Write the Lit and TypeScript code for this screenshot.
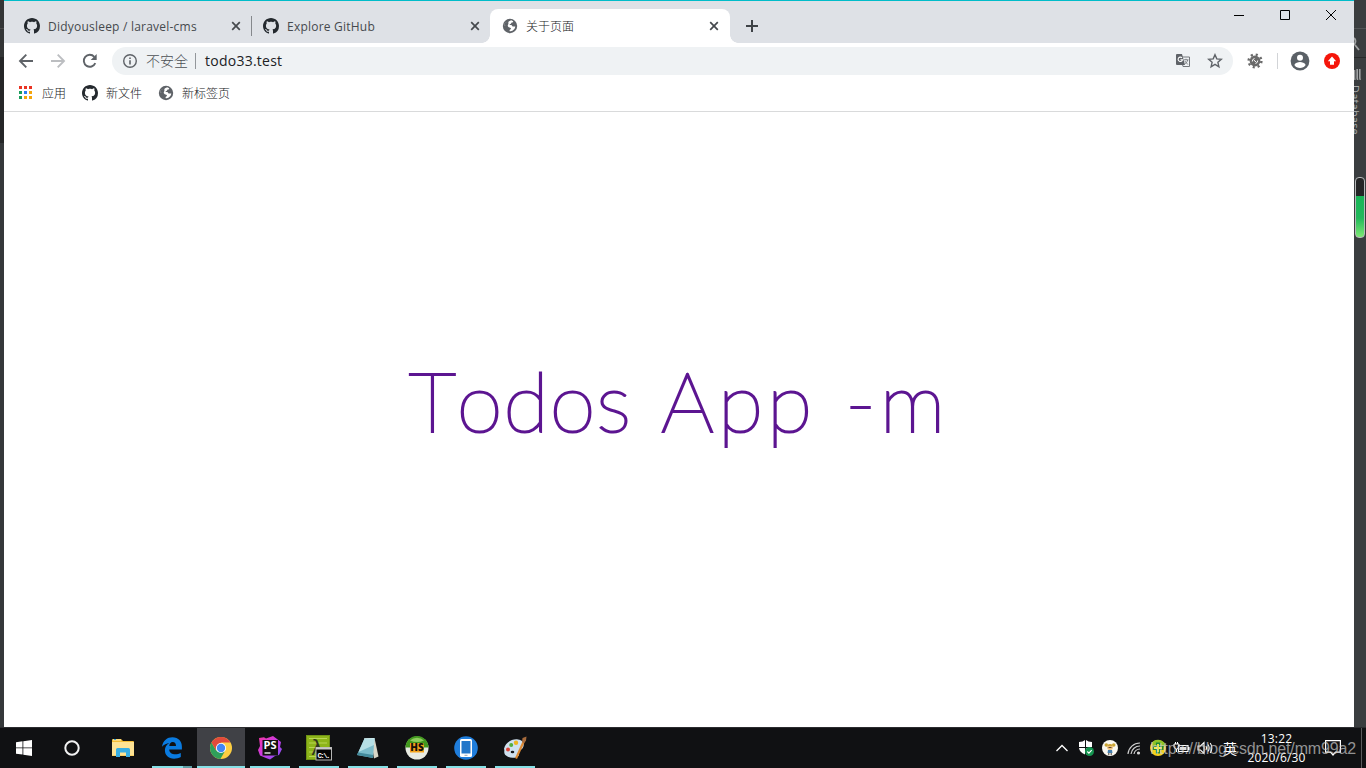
import { LitElement, html, css, svg } from 'lit';
import { customElement } from 'lit/decorators.js';
import { classMap } from 'lit/directives/class-map.js';

const github = html`
  <svg width="16" height="16" viewBox="0 0 16 16">
    <path fill="#24292e" d="M8 0C3.58 0 0 3.58 0 8c0 3.54 2.29 6.53 5.47 7.59.4.07.55-.17.55-.38 0-.19-.01-.82-.01-1.49-2.01.37-2.53-.49-2.69-.94-.09-.23-.48-.94-.82-1.13-.28-.15-.68-.52-.01-.53.63-.01 1.08.58 1.23.82.72 1.21 1.87.87 2.33.66.07-.52.28-.87.51-1.07-1.78-.2-3.64-.89-3.64-3.95 0-.87.31-1.59.82-2.15-.08-.2-.36-1.02.08-2.12 0 0 .67-.21 2.2.82.64-.18 1.32-.27 2-.27s1.36.09 2 .27c1.53-1.04 2.2-.82 2.2-.82.44 1.1.16 1.92.08 2.12.51.56.82 1.27.82 2.15 0 3.07-1.87 3.75-3.65 3.95.29.25.54.73.54 1.48 0 1.07-.01 1.93-.01 2.2 0 .21.15.46.55.38A8.01 8.01 0 0 0 16 8c0-4.42-3.58-8-8-8z"/>
  </svg>`;

const globe = html`
  <svg width="16" height="16" viewBox="0 0 16 16">
    <circle cx="8" cy="8" r="7.2" fill="#5f6368"/>
    <path fill="#fff" d="M9.2 2.3l1.9.9c.3.8-.4 1.300-1.300 1.400-.8.100-.5 1.300-1.400 1.400-1 .1-1.100.6-.4.9h1.200c1 .2.700 1.400 1.700 1.500h2.400c-.2 2.300-2 4.400-4.700 4.900-1 .1-1.100-.300-1-1 .1-.8 1.400-.9 1.400-1.800-.1-.9-1.300-.8-2.200-1.300-.9-.5-.8-1.400-1.900-1.600L2.300 7.300c.1-1.300.6-2.300 1.300-3.200.9.500 1.300 1.200 2.400.8.900-.4.200-1.200 1.100-1.600.8-.3 1.300-.4 2.100-1z"/>
    <path fill="#5f6368" d="M2.100 6.500l1.300-2.500 2 .3 1.100 1-.5 1.600-.5 1.200-1.500.2z"/>
  </svg>`;

const cross = html`
  <svg width="10" height="10" viewBox="0 0 10 10">
    <path d="M1.200 1.200l7.600 7.600M8.800 1.200L1.200 8.800" stroke="#45494d" stroke-width="1.700"/>
  </svg>`;

const back = html`
  <svg width="16" height="16" viewBox="0 0 16 16" fill="none" stroke="currentColor" stroke-width="1.900">
    <path d="M15 8H2.500M8.300 1.700L2 8l6.300 6.300"/>
  </svg>`;

const reload = html`
  <svg width="16" height="16" viewBox="0 0 16 16">
    <path d="M13.300 10.200A6 6 0 1 1 12.300 3.800" fill="none" stroke="#5f6368" stroke-width="1.900"/>
    <path d="M14.700 1v6H8.700z" fill="#5f6368"/>
  </svg>`;

const info = html`
  <svg width="14" height="14" viewBox="0 0 14 14">
    <circle cx="7" cy="7" r="6.300" fill="none" stroke="#5f6368" stroke-width="1.400"/>
    <path d="M7 6.200v4.300M7 3.500v1.500" stroke="#5f6368" stroke-width="1.600"/>
  </svg>`;

const translate = html`
  <svg width="16" height="16" viewBox="0 0 16 16">
    <path d="M6 4h8.500v9.500H8z" fill="#eff2f4" stroke="#74787c"/>
    <path d="M1 2q0-1 1-1h5l3 11H2q-1 0-1-1z" fill="#5f6368"/>
    <path d="M7 4.900a2.200 2.200 0 1 0 .5 1.800H5.400" fill="none" stroke="#fff" stroke-width="1.100"/>
    <path d="M9 6.800h4.500M11 5.800v1M12.700 7c-.5 2-1.700 3.200-3 4M9.800 8l3 3.500" fill="none" stroke="#74787c" stroke-width=".9"/>
  </svg>`;

const star = html`
  <svg width="16" height="16" viewBox="0 0 16 16">
    <path d="M8 1.700l1.800 4.200 4.500.4-3.400 3 1 4.500L8 11.400l-3.900 2.400 1-4.500-3.400-3 4.500-.4z" fill="none" stroke="#5f6368" stroke-width="1.400"/>
  </svg>`;

const gear = html`
  <svg width="16" height="16" viewBox="0 0 16 16">
    <circle cx="8" cy="8" r="5.400" fill="#6a6a6a"/>
    <circle cx="8" cy="8" r="6.400" fill="none" stroke="#6a6a6a" stroke-width="2.400" stroke-dasharray="2.100 2.920"/>
    <path d="M5.300 8.500a3 3 0 0 1 2.200-3M10.700 7.500a3 3 0 0 1-2.200 3M6.800 7l2.400 2.200" fill="none" stroke="#fff" stroke-width="1"/>
  </svg>`;

const profile = html`
  <svg width="20" height="20" viewBox="0 0 20 20">
    <circle cx="10" cy="10" r="9.400" fill="#5a6066"/>
    <circle cx="10" cy="6.800" r="3" fill="#fff"/>
    <path d="M4.300 14c1-2.200 3.600-3 5.700-3s4.700.8 5.700 3a7 7 0 0 1-11.400 0z" fill="#fff"/>
  </svg>`;

const update = html`
  <svg width="16" height="16" viewBox="0 0 16 16">
    <circle cx="8" cy="8" r="8" fill="#f5150a"/>
    <path d="M8 3.500l4.200 4.700H10v3.600H6V8.200H3.800z" fill="#fff"/>
  </svg>`;

const appColors = ['#ea3323', '#ea3323', '#ea3323', '#1a9e5c', '#2b7cf0', '#f5a50b', '#1a9e5c', '#f5a50b', '#f5a50b'];

const appsGrid = html`
  <svg width="14" height="14" viewBox="0 0 14 14">
    ${appColors.map((color, i) => svg`<rect x=${(i % 3) * 5} y=${Math.floor(i / 3) * 5} width="3" height="3" fill=${color} />`)}
  </svg>`;

const windowsLogo = html`
  <svg width="16" height="16" viewBox="0 0 16 16">
    <path fill="#fff" d="M0 2.200l6.500-.9v6.200H0zM7.300 1.200L16 0v7.500H7.300zM0 8.300h6.500v6.300L0 13.700zM7.300 8.300H16V16l-8.700-1.200z"/>
  </svg>`;

const cortana = html`
  <svg width="16" height="16" viewBox="0 0 16 16">
    <circle cx="8" cy="8" r="6.700" fill="none" stroke="#f2f2f2" stroke-width="2"/>
  </svg>`;

const folder = html`
  <svg width="22" height="20" viewBox="0 0 22 20">
    <path d="M0 2q0-1 1-1h8l2 2h10q1 0 1 1v14H0z" fill="#f3bd36"/>
    <path d="M1 1h8v2H1z" fill="#fdd878"/>
    <path d="M2 1.500h2" stroke="#37a9e0"/>
    <path d="M0 4h22v13.500H0z" fill="#fee394"/>
    <path d="M4 19v-7.500q0-1.500 1.500-1.500h11q1.500 0 1.500 1.500V19h-4v-4.500H8V19z" fill="#38aee3"/>
  </svg>`;

const edge = html`
  <svg width="20" height="22" viewBox="0 0 20 22">
    <path fill="#0a7be0" d="M0 9.800C1 3.500 5.300.3 10.400.3c6.200 0 9.500 4.300 9.500 9.500v2.700H7.200c.2 3.400 3 4.800 6 4.800 2.200 0 3.900-.5 5.600-1.400v4.200c-2 1.100-4.400 1.600-6.800 1.600-5.600 0-9.100-3.500-9.100-8.400 0-3.300 1.700-6 4.600-7.300C4.400 6.500 2 7.500 0 9.800zM7.300 8.900H14c0-2.500-1.200-4-3.300-4-2 0-3.300 1.800-3.400 4z"/>
  </svg>`;

const chrome = html`
  <svg width="22" height="22" viewBox="0 0 22 22">
    <circle cx="11" cy="11" r="11" fill="#fdce42"/>
    <path d="M1.500 5.500A11 11 0 0 0 10.400 22l4.900-8.500H6.200z" fill="#2f9f5a"/>
    <path d="M1.500 5.500A11 11 0 0 1 20.500 5.500H11L6.200 13.600z" fill="#e24a3b"/>
    <circle cx="11" cy="11" r="5.100" fill="#fff"/>
    <circle cx="11" cy="11" r="4.200" fill="#4386f4"/>
  </svg>`;

const phpstorm = html`
  <svg width="24" height="24" viewBox="0 0 24 24">
    <defs>
      <linearGradient id="ps" x1="0" y1="0" x2="1" y2="1">
        <stop offset="0" stop-color="#f4359e"/>
        <stop offset=".5" stop-color="#c93be8"/>
        <stop offset="1" stop-color="#7956f4"/>
      </linearGradient>
    </defs>
    <path d="M1 2l5-.8 2 1.200L15 0l8 6-1 5 2 2-3 6-4 1-5 3.500-4-1.500-6-2.500L0 14l2-4z" fill="url(#ps)"/>
    <rect x="4.500" y="4" width="15.500" height="15.500" fill="#111"/>
    <text x="5.500" y="12.800" font-family="Open Sans, sans-serif" font-size="10.500" font-weight="700" fill="#fff" textLength="13" lengthAdjust="spacingAndGlyphs">PS</text>
    <path d="M6.500 17h6" stroke="#fff" stroke-width="1.300"/>
  </svg>`;

const lambda = html`
  <svg width="26" height="26" viewBox="0 0 26 26">
    <rect x="0" y="0" width="24" height="25" fill="#8db51a"/>
    <rect x=".5" y=".5" width="23" height="24" fill="none" stroke="#6f9314"/>
    <path d="M3 3.500h18M3 8h18M3 12.500h18M3 17h18M3 21.500h18" stroke="#b9d755" stroke-width="1.200"/>
    <text x="5" y="20" font-family="DejaVu Sans, sans-serif" font-size="21" fill="#30371d">λ</text>
    <rect x="10" y="12.500" width="15.500" height="12.500" fill="#050505" stroke="#b5b5b5"/>
    <path d="M10 13.500h15.500" stroke="#c9c9c9" stroke-width="2"/>
    <text x="11.500" y="22.500" font-family="Liberation Mono, monospace" font-size="7.500" font-weight="700" fill="#fff" textLength="13">C:\\.</text>
  </svg>`;

const notepad = html`
  <svg width="24" height="22" viewBox="0 0 24 22">
    <path d="M18.500 1l4 18.500-4.500 2L15 2z" fill="#d9d6c8"/>
    <path d="M8.500 1.500L18.500 1 17 21 1 18z" fill="#7cbccb"/>
    <path d="M8.500 1.500L18.500 1l-.5 7L2.500 15z" fill="#b6e0e6"/>
    <path d="M1 18l16 3 .3-3L2 15.500z" fill="#438a9c"/>
    <path d="M8.500 1.500h10" stroke="#e9f6f6" stroke-dasharray="1 1"/>
  </svg>`;

const heidi = html`
  <svg width="24" height="24" viewBox="0 0 24 24">
    <circle cx="12" cy="12" r="11.500" fill="#e8ebe2"/>
    <path d="M.5 11.500a11.500 11.500 0 0 1 23 0z" fill="#42991e"/>
    <path d="M5 4.500a10 10 0 0 1 14 0q-7 3-14 0" fill="#8fcd5e"/>
    <rect x="5" y="7" width="14" height="9.500" fill="#f5a41d"/>
    <text x="5.200" y="15.300" font-family="Open Sans, sans-serif" font-size="10" font-weight="800" fill="#15120a" textLength="13.500">HS</text>
  </svg>`;

const phone = html`
  <svg width="24" height="24" viewBox="0 0 24 24">
    <circle cx="12" cy="12" r="11.800" fill="#1f7ddb"/>
    <rect x="6" y="3" width="12" height="18" rx="1.500" fill="#fff"/>
    <path d="M7.500 5h9v12.500h-9z" fill="#2477c9"/>
    <path d="M10.500 19.300h3" stroke="#96a5b2"/>
  </svg>`;

const paint = html`
  <svg width="24" height="24" viewBox="0 0 24 24">
    <path d="M1 13C2 7 9 2.500 15 3.500c6 1 6.500 5 5 8s-3.500 1.500-4 4 1 4-2 5.500c-4 1.500-8 1-11-1.500s-1-5-2-6.500z" fill="#cfe0ee"/>
    <circle cx="5" cy="13.500" r="2" fill="#dc4438"/>
    <circle cx="8.200" cy="9" r="2" fill="#54ae3e"/>
    <circle cx="13" cy="6.800" r="2.200" fill="#eeb421"/>
    <ellipse cx="9.500" cy="16" rx="1.800" ry="1.200" fill="#15171b"/>
    <path d="M20.500 6L13 22.500" stroke="#dd8a34" stroke-width="2.200"/>
    <path d="M19 6l.5-4 4-1.500-.5 4-2 3z" fill="#a66b3c"/>
  </svg>`;

const chevron = html`
  <svg width="14" height="14" viewBox="0 0 14 14">
    <path d="M1.500 10L7 4.500l5.500 5.500" fill="none" stroke="#fff" stroke-width="1.300"/>
  </svg>`;

const shield = html`
  <svg width="16" height="16" viewBox="0 0 16 16">
    <path d="M7 0q-2 2-6 2v5h6zM8 0q2 2 6 2v5H8zM1 8h6v6.500Q1.500 12 1 8zM8 8h6q-.5 4-6 6.500z" fill="#fff"/>
    <circle cx="11.500" cy="11.500" r="4.500" fill="#159550"/>
    <path d="M9.300 11.500l1.600 1.600 2.800-3" stroke="#fff" fill="none" stroke-width="1.100"/>
  </svg>`;

const avatar = html`
  <svg width="16" height="16" viewBox="0 0 16 16">
    <circle cx="8" cy="8" r="8" fill="#faf8f0"/>
    <circle cx="4.300" cy="5" r="1.800" fill="#c9a432"/>
    <circle cx="11.700" cy="5" r="1.800" fill="#c9a432"/>
    <circle cx="8" cy="7" r="3" fill="#edc27e"/>
    <path d="M5 6q3-4 6 0z" fill="#c9a432"/>
    <path d="M6.500 7.500h3" stroke="#5d4630"/>
    <path d="M6 10h4l.5 3h-5z" fill="#447dab"/>
    <path d="M6.800 13v2M9.200 13v2" stroke="#443b34"/>
  </svg>`;

const wifi = html`
  <svg width="14" height="14" viewBox="0 0 14 14" fill="none" stroke="#d0d0d0" stroke-width="1.200">
    <path d="M1 13A12 12 0 0 1 13 2M4 13A9 9 0 0 1 13 5M7 13a6 6 0 0 1 6-5"/>
    <circle cx="11.500" cy="12" r="1" fill="#fff"/>
  </svg>`;

const plusBall = html`
  <svg width="18" height="18" viewBox="0 0 18 18">
    <circle cx="9" cy="9" r="8" fill="#f6d11c"/>
    <path d="M3.500 3a8 8 0 0 1 13 3L14 9 8 6 3 9z" fill="#8ec428"/>
    <path d="M9 3.500v11M3.500 9h11" stroke="#1d8a34" stroke-width="4.200"/>
    <path d="M9 5v8M5 9h8" stroke="#f9ec48" stroke-width="1.800"/>
  </svg>`;

const battery = html`
  <svg width="18" height="14" viewBox="0 0 18 14">
    <path d="M5.500 4.500H15v6H5.500zM16 6v3" fill="none" stroke="#fff" stroke-width="1.200"/>
    <path d="M7 6h6.500v3H7z" fill="#ddd"/>
    <path d="M1 3h5v3q-.5 2-2.500 2T1 6zM2.500 1v2M4.500 1v2M3.500 8v3" fill="none" stroke="#fff"/>
  </svg>`;

const speaker = html`
  <svg width="18" height="14" viewBox="0 0 18 14" fill="none" stroke="#fff" stroke-width="1.100">
    <path d="M1 5h2.500L7 1.500v11L3.500 9H1zM9 5q1.300 2 0 4M11 3.500q2.300 3.500 0 7M13.200 2q3.300 5 0 10"/>
  </svg>`;

const notification = html`
  <svg width="16" height="16" viewBox="0 0 16 16">
    <path d="M.6.600h14.800v11.500H10.500L8 15l-2.500-2.900H.6z" fill="none" stroke="#fff" stroke-width="1.200"/>
  </svg>`;

@customElement('browser-window')
export class BrowserWindow extends LitElement {
  static styles = css`
    :host {
      display: flex;
      flex-direction: column;
      box-sizing: border-box;
      border-top: 1px solid #00bcc9;
      background: #fff;
      font-family: 'Open Sans', 'Noto Sans CJK SC', sans-serif;
      font-size: 12px;
      color: #45494d;
      min-width: 0;
    }

    svg {
      display: block;
      flex: none;
    }

    .tabs {
      display: flex;
      height: 42px;
      background: #dee1e6;
      padding-left: 8px;
      box-sizing: border-box;
    }

    .tab {
      display: flex;
      align-items: center;
      box-sizing: border-box;
      width: 239px;
      height: 34px;
      margin-top: 8px;
      padding: 0 10px 0 12px;
      gap: 8px;
      position: relative;
    }

    .tab.active {
      width: 240px;
      padding-right: 11px;
      background: #fff;
      border-radius: 8px 8px 0 0;
    }

    .tab.active::before,
    .tab.active::after {
      content: '';
      position: absolute;
      bottom: 0;
      width: 8px;
      height: 8px;
    }

    .tab.active::before {
      left: -8px;
      background: radial-gradient(circle at 0 0, transparent 7.5px, #fff 8px);
    }

    .tab.active::after {
      right: -8px;
      background: radial-gradient(circle at 100% 0, transparent 7.5px, #fff 8px);
    }

    .tab.divided::after {
      content: '';
      position: absolute;
      right: -1px;
      top: 7px;
      width: 1px;
      height: 20px;
      background: #85888c;
    }

    .title {
      flex: 1;
      white-space: nowrap;
      letter-spacing: 0.22px;
    }

    .tab.active .title {
      letter-spacing: 0;
      font-weight: 300;
      color: #202124;
    }

    .new-tab {
      display: flex;
      align-items: center;
      justify-content: center;
      width: 28px;
      height: 34px;
      margin: 8px 0 0 8px;
    }

    .controls {
      display: flex;
      margin-left: auto;
    }

    .control {
      display: flex;
      align-items: center;
      justify-content: center;
      width: 46px;
      height: 28px;
    }

    .toolbar {
      display: flex;
      align-items: center;
      height: 36px;
      padding-left: 6px;
    }

    .nav {
      display: flex;
      justify-content: center;
      width: 32px;
      color: #5f6368;
    }

    .nav.off {
      color: #bcbec1;
      transform: scaleX(-1);
    }

    .address {
      display: flex;
      align-items: center;
      box-sizing: border-box;
      width: 1121px;
      height: 28px;
      margin-left: 6px;
      padding: 0 10px 0 11px;
      border-radius: 14px;
      background: #eff2f4;
      font-size: 14px;
    }

    .insecure {
      margin-left: 9px;
      color: #4c5054;
      font-weight: 300;
      line-height: 20px;
    }

    .bar {
      width: 1px;
      height: 16px;
      margin: 0 9px 0 7px;
      background: #93979b;
    }

    .url {
      flex: 1;
      margin-top: -2px;
      color: #202124;
      letter-spacing: 0.25px;
    }

    .star {
      margin-left: 16px;
    }

    .extensions {
      display: flex;
      align-items: center;
      margin-left: 14px;
    }

    .extensions .line {
      width: 1px;
      height: 16px;
      margin: 0 12px 0 14px;
      background: #d2d4d7;
    }

    .extensions .update {
      margin-left: 14px;
    }

    .bookmarks {
      display: flex;
      align-items: center;
      box-sizing: border-box;
      height: 33px;
      padding: 0 0 5px 15px;
      border-bottom: 1px solid #d9dadb;
      color: #202124;
      font-weight: 300;
    }

    .bookmark {
      display: flex;
      align-items: center;
      gap: 8px;
      margin-right: 16px;
    }

    .bookmark.apps {
      gap: 9px;
    }

    .page {
      flex: 1;
      display: flex;
      justify-content: center;
      align-items: center;
      padding-bottom: 40px;
    }

    .heading {
      display: flex;
      gap: 29px;
      margin: 0;
      font-family: Lato, sans-serif;
      font-size: 83px;
      font-weight: 200;
      font-kerning: none;
      letter-spacing: 1px;
      color: #5c1591;
      -webkit-text-stroke: 2.2px #5c1591;
      stroke-linejoin: round;
    }

    .heading .wide {
      letter-spacing: 4px;
    }
  `;

  tabs = [
    { title: 'Didyousleep / laravel-cms', icon: github, active: false, divided: true },
    { title: 'Explore GitHub', icon: github, active: false, divided: false },
    { title: '关于页面', icon: globe, active: true, divided: false },
  ];

  render() {
    return html`
      <div class="tabs">
        ${this.tabs.map(
          (tab) => html`
            <div class=${classMap({ tab: true, active: tab.active, divided: tab.divided })}>
              ${tab.icon}<span class="title">${tab.title}</span>${cross}
            </div>
          `
        )}
        <div class="new-tab">
          <svg width="12" height="12" viewBox="0 0 12 12"><path d="M6 0v12M0 6h12" stroke="#3f4347" stroke-width="2"/></svg>
        </div>
        <div class="controls">
          <div class="control"><svg width="10" height="10"><path d="M0 5.500h10" stroke="#000"/></svg></div>
          <div class="control"><svg width="10" height="10"><path d="M.5.500h9v9h-9z" fill="none" stroke="#000"/></svg></div>
          <div class="control"><svg width="10" height="10"><path d="M0 0l10 10M10 0L0 10" stroke="#000"/></svg></div>
        </div>
      </div>
      <div class="toolbar">
        <div class="nav">${back}</div>
        <div class="nav off">${back}</div>
        <div class="nav">${reload}</div>
        <div class="address">
          ${info}
          <span class="insecure">不安全</span>
          <span class="bar"></span>
          <span class="url">todo33.test</span>
          ${translate}
          <span class="star">${star}</span>
        </div>
        <div class="extensions">
          ${gear}
          <span class="line"></span>
          ${profile}
          <span class="update">${update}</span>
        </div>
      </div>
      <div class="bookmarks">
        <div class="bookmark apps">${appsGrid}<span>应用</span></div>
        <div class="bookmark">${github}<span>新文件</span></div>
        <div class="bookmark">${globe}<span>新标签页</span></div>
      </div>
      <div class="page">
        <h1 class="heading">
          <span>Todos</span>
          <span class="wide">App</span>
          <span class="wide">-m</span>
        </h1>
      </div>
    `;
  }
}

@customElement('task-bar')
export class TaskBar extends LitElement {
  static styles = css`
    :host {
      display: flex;
      box-sizing: border-box;
      background: #101113;
      border-top: 1px solid #2b2c2f;
      color: #fff;
      font-family: 'Open Sans', 'Noto Sans CJK SC', sans-serif;
      font-size: 12px;
      position: relative;
    }

    svg {
      display: block;
    }

    .start {
      display: flex;
      margin-right: 3px;
    }

    .apps {
      display: flex;
      gap: 1px;
    }

    .cell {
      display: flex;
      align-items: center;
      justify-content: center;
      width: 48px;
      height: 40px;
      box-sizing: border-box;
      position: relative;
    }

    .cell.running::after {
      content: '';
      position: absolute;
      left: 4px;
      right: 4px;
      bottom: 0;
      height: 2px;
      background: #85e0e6;
    }

    .cell.focused {
      background: #404146;
    }

    .cell.focused::after {
      left: 0;
      right: 0;
    }

    .cell.stacked::after {
      background: linear-gradient(90deg, #85e0e6 31px, #5f9ea5 31px);
    }

    .tray {
      display: flex;
      margin-left: auto;
    }

    .item {
      display: flex;
      align-items: center;
      justify-content: center;
      width: 24px;
      height: 40px;
    }

    .ime {
      font-size: 14px;
    }

    .clock {
      width: 69px;
      padding-top: 1px;
      text-align: center;
      line-height: 19px;
      letter-spacing: 0.15px;
    }

    .notice {
      width: 44px;
    }

    .desktop {
      width: 4px;
      margin-left: 6px;
      border-left: 1px solid #5a5b5d;
    }

    .watermark {
      position: absolute;
      right: 10px;
      top: 11px;
      font-family: 'Liberation Sans', sans-serif;
      font-size: 16px;
      line-height: 20px;
      letter-spacing: -0.15px;
      color: rgba(205, 205, 205, 0.7);
      white-space: nowrap;
    }
  `;

  apps = [
    { icon: folder },
    { icon: edge, running: true, stacked: true },
    { icon: chrome, running: true, focused: true },
    { icon: phpstorm, running: true },
    { icon: lambda, running: true },
    { icon: notepad, running: true },
    { icon: heidi, running: true },
    { icon: phone, running: true },
    { icon: paint, running: true },
  ];

  tray = [chevron, shield, avatar, wifi, plusBall, battery, speaker];

  render() {
    return html`
      <div class="start">
        <div class="cell">${windowsLogo}</div>
        <div class="cell">${cortana}</div>
      </div>
      <div class="apps">
        ${this.apps.map(
          (app) => html`
            <div class=${classMap({ cell: true, running: !!app.running, focused: !!app.focused, stacked: !!app.stacked })}>
              ${app.icon}
            </div>
          `
        )}
      </div>
      <div class="tray">
        ${this.tray.map((icon) => html`<div class="item">${icon}</div>`)}
        <div class="item ime">英</div>
        <div class="clock">
          <div>13:22</div>
          <div>2020/6/30</div>
        </div>
        <div class="item notice">${notification}</div>
        <div class="desktop"></div>
      </div>
      <div class="watermark">https://blog.csdn.net/mm99a2</div>
    `;
  }
}

@customElement('app-root')
export class AppRoot extends LitElement {
  static styles = css`
    :host {
      display: grid;
      grid-template-columns: 4px 1350px 12px;
      grid-template-rows: 727px 41px;
      width: 1366px;
      height: 768px;
      overflow: hidden;
      background: #35383a;
    }

    .left {
      background: linear-gradient(#333536 28px, #4b4b4b 28px, #4b4b4b 29px, #333536 29px, #333536 57px, #252627 57px, #252627 143px, #35383a 143px);
    }

    .right {
      display: flex;
      flex-direction: column;
      overflow: hidden;
      background: linear-gradient(#3a3d3f 28px, #515456 28px, #515456 29px, #3a3d3f 29px, #3a3d3f 57px, #28292a 57px, #28292a 58px, #3a3d3f 58px);
    }

    .search {
      display: block;
      height: 14px;
      margin-top: 37px;
    }

    .db {
      display: block;
      margin-top: 17px;
    }

    .label {
      height: 50px;
      width: 14px;
      margin: 5px 0 0 -6px;
      writing-mode: vertical-rl;
      font: 11px/14px 'Open Sans', sans-serif;
      letter-spacing: 0.2px;
      color: #a9abac;
      white-space: nowrap;
    }

    .meter {
      box-sizing: border-box;
      width: 10px;
      height: 61px;
      margin: 42px 0 0 1px;
      border: 1px solid #b7b9ba;
      border-radius: 4px;
      background: linear-gradient(#242526 18px, #18b558 18px, #22b85b 40px, #7de874);
    }

    .bar {
      grid-column: 1 / 4;
    }
  `;

  render() {
    return html`
      <div class="left"></div>
      <browser-window></browser-window>
      <div class="right">
        <svg class="search" width="12" height="14"><path d="M0 1q3 3 0 7M1 8l4 5" fill="none" stroke="#a0a2a3" stroke-width="1.800"/></svg>
        <svg class="db" width="12" height="12"><path d="M.5 2v8q0 1.500 1 1.500M3.200 1v9q0 1.500 1 1.500M5.800 1v9q0 1.500 1 1.500" fill="none" stroke="#a0a2a3" stroke-width="1.600"/></svg>
        <div class="label">Database</div>
        <div class="meter"></div>
      </div>
      <task-bar class="bar"></task-bar>
    `;
  }
}
